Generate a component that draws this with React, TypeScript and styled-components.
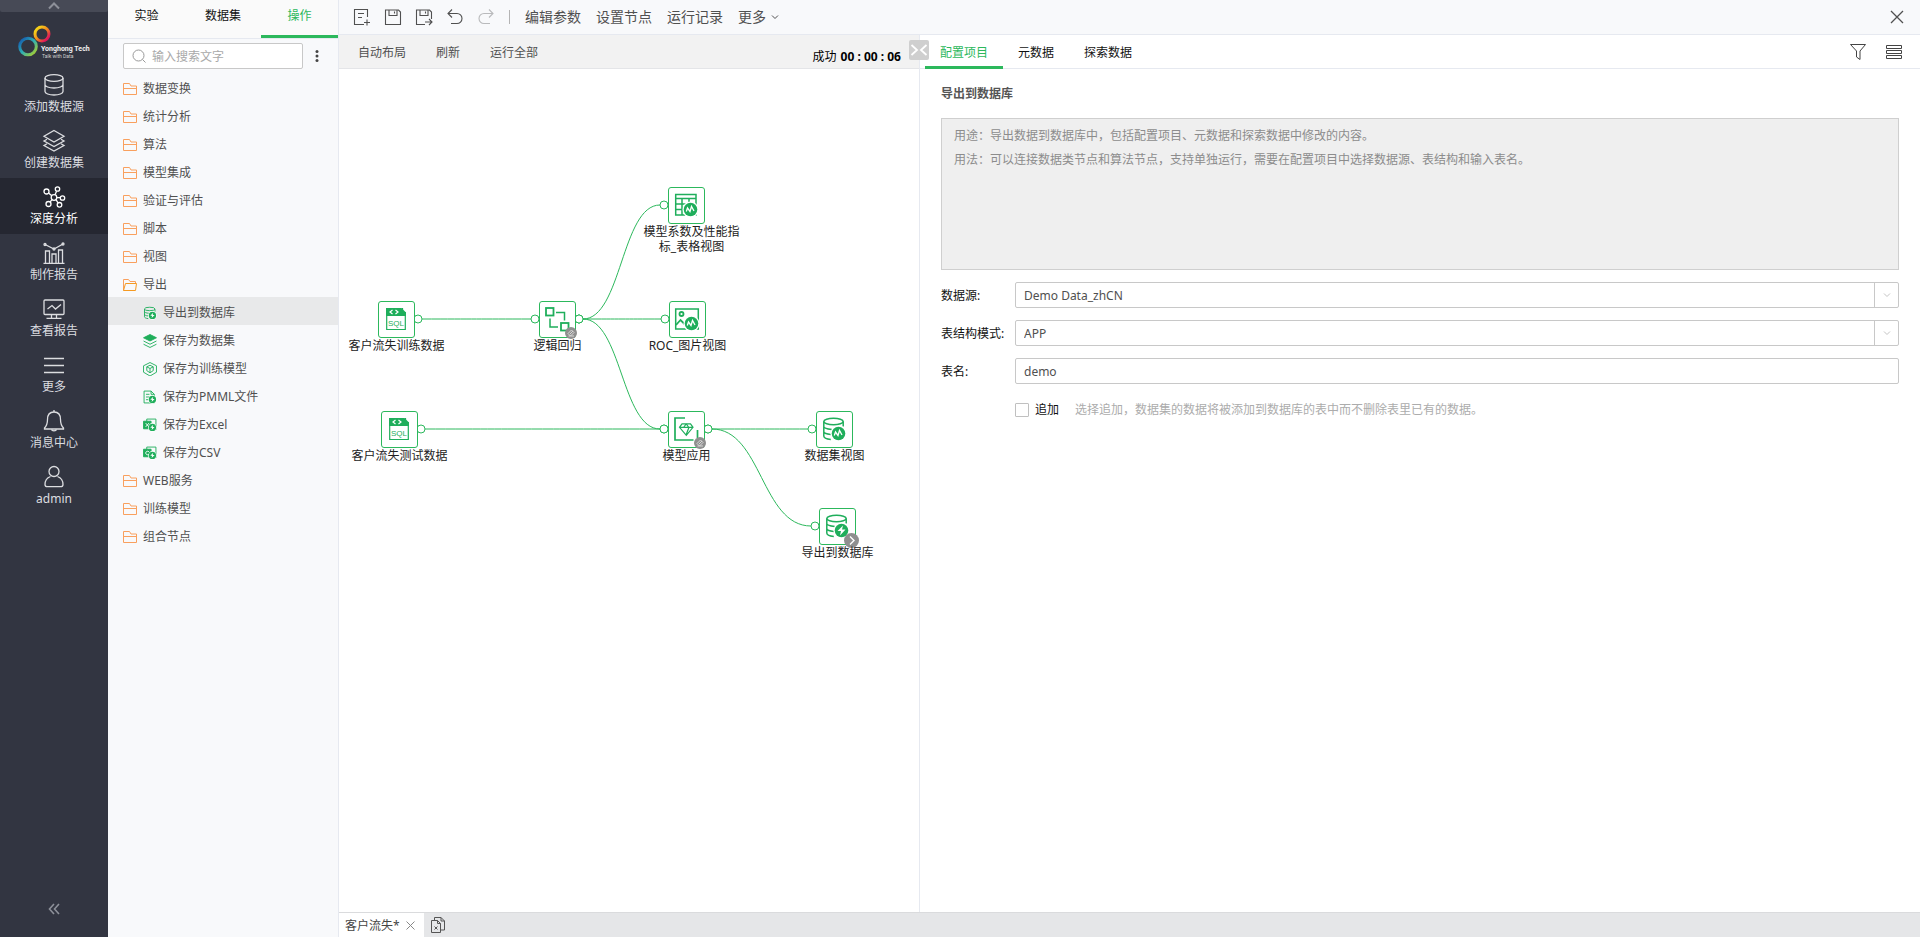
import React, { useState } from "react";
import styled, { createGlobalStyle } from "styled-components";

const green = "#2cb85c";
const iconGreen = "#1fae5b";
const line = "#e6e9f0";
const ink = "#505050";

const GlobalStyle = createGlobalStyle`
  *, *::before, *::after { box-sizing: border-box; }
  body {
    margin: 0;
    font-family: "Noto Sans", "Noto Sans CJK SC", sans-serif;
    font-size: 12px;
    line-height: 16px;
    color: #333;
    background: #fff;
  }
  button, input, select { font: inherit; color: inherit; }
  button { padding: 0; border: 0; background: none; cursor: pointer; }
  ul { margin: 0; padding: 0; list-style: none; }
  svg { display: block; flex: none; }
`;

/* ---------- shell ---------- */

const Shell = styled.div`
  display: grid;
  grid-template-columns: 108px 231px minmax(0, 1fr);
  min-height: 100vh;
`;

const Nav = styled.nav`
  display: flex;
  flex-direction: column;
  background: #323541;
  color: #dcdde0;
`;

const NavFold = styled.button`
  display: flex;
  justify-content: center;
  align-items: center;
  height: 12px;
  background: #474a56;
  border-radius: 0 0 2px 2px;
`;

const Logo = styled.div`
  height: 54px;
`;

const NavItem = styled.button<{ $active?: boolean }>`
  display: flex;
  flex-direction: column;
  align-items: center;
  gap: 2px;
  width: 100%;
  height: 56px;
  padding-top: 7px;
  background: ${(p) => (p.$active ? "#252731" : "transparent")};
  color: ${(p) => (p.$active ? "#fff" : "inherit")};
`;

const NavCollapse = styled.button`
  display: flex;
  justify-content: center;
  margin-top: auto;
  padding-bottom: 20px;
  color: #8d9099;
`;

/* ---------- side panel ---------- */

const Side = styled.aside`
  display: flex;
  flex-direction: column;
  background: #f8f9fb;
  border-right: 1px solid ${line};
`;

const SideTabs = styled.div`
  display: grid;
  grid-template-columns: 77px 76px 77px;
  height: 39px;
  background: #fafafa;
  border-bottom: 1px solid ${line};
`;

const SideTab = styled.button<{ $active?: boolean }>`
  padding-bottom: 4px;
  border-bottom: 3px solid ${(p) => (p.$active ? green : "transparent")};
  color: ${(p) => (p.$active ? green : "#111")};
`;

const SearchRow = styled.div`
  display: flex;
  align-items: center;
  gap: 12px;
  padding: 4px 0 4px 15px;
`;

const SearchBox = styled.label`
  display: flex;
  align-items: center;
  gap: 6px;
  width: 180px;
  height: 26px;
  padding: 0 8px;
  background: #fff;
  border: 1px solid #c8c8c8;
  border-radius: 2px;
  color: #999;

  input {
    flex: 1;
    min-width: 0;
    padding: 2px 0 0;
    border: 0;
    outline: 0;
    background: none;
  }
  input::placeholder { color: #a9a9a9; opacity: 1; }
`;

const TreeRow = styled.button<{ $child?: boolean; $active?: boolean }>`
  display: flex;
  align-items: center;
  gap: 6px;
  width: 100%;
  height: 28px;
  padding-top: 3px;
  padding-left: ${(p) => (p.$child ? 35 : 15)}px;
  background: ${(p) => (p.$active ? "#e8e9ea" : "transparent")};
  color: ${ink};
  text-align: left;
`;

/* ---------- main area ---------- */

const Main = styled.main`
  display: grid;
  grid-template-rows: 35px minmax(0, 1fr) 25px;
  min-width: 0;
`;

const TopBar = styled.header`
  display: flex;
  align-items: center;
  padding: 0 16px 0 14px;
  background: #f8f9fb;
  border-bottom: 1px solid ${line};
  color: ${ink};
`;

const IconGroup = styled.div`
  display: flex;
  gap: 13px;
`;

const IconButton = styled.button<{ $muted?: boolean }>`
  color: ${(p) => (p.$muted ? "#b9babc" : ink)};
`;

const Separator = styled.span`
  width: 1px;
  height: 14px;
  margin: 0 15px 0 14px;
  background: #b4b4b4;
`;

const MenuGroup = styled.div`
  display: flex;
  gap: 15px;
  font-size: 14px;
`;

const MenuButton = styled.button`
  display: flex;
  align-items: center;
  gap: 5px;
`;

const CloseButton = styled.button`
  margin-left: auto;
`;

const Workspace = styled.div`
  display: grid;
  grid-template-columns: 581fr 1000fr;
`;

const FlowPane = styled.section`
  position: relative;
  display: flex;
  flex-direction: column;
  border-right: 1px solid ${line};
`;

const FlowBar = styled.div`
  display: flex;
  align-items: center;
  gap: 30px;
  height: 34px;
  padding: 2px 18px 0 19px;
  background: #f2f2f2;
  border-bottom: 1px solid #e4e5e8;
  color: ${ink};
`;

const Status = styled.span`
  margin-left: auto;
  padding-top: 8px;
  color: #000;

  b { margin-left: 4px; }
`;

const SplitHandle = styled.button`
  position: absolute;
  top: 5px;
  right: -10px;
  display: grid;
  place-items: center;
  width: 20px;
  height: 20px;
  background: #cfcfcf;
  border-radius: 2px;
  color: #fff;
`;

const Canvas = styled.div`
  position: relative;
  flex: 1;
  min-height: 480px;
  overflow: hidden;
`;

const Edges = styled.svg`
  position: absolute;
  inset: 0;
  width: 100%;
  height: 100%;
`;

const Node = styled.div<{ $x: number; $y: number }>`
  position: absolute;
  left: ${(p) => p.$x - 30}px;
  top: ${(p) => p.$y}px;
  display: flex;
  flex-direction: column;
  align-items: center;
  width: 97px;
`;

const NodeBox = styled.div`
  position: relative;
  width: 37px;
  height: 37px;
  background: #fff;
  border: 1px solid ${green};
  border-radius: 3px;

  > svg { margin: -1px; }
`;

/* A wrapped label is hung from a wider block, which carries it to the right of the box. */
const NodeLabel = styled.span<{ $wrapped?: boolean }>`
  position: relative;
  width: ${(p) => (p.$wrapped ? "107px" : "auto")};
  padding-left: ${(p) => (p.$wrapped ? 10 : 0)}px;
  line-height: 15px;
  text-align: center;
  word-break: break-all;
  color: #222;
`;

const Badge = styled.span<{ $size: number }>`
  position: absolute;
  right: ${(p) => 4 - Math.ceil(p.$size / 2)}px;
  bottom: ${(p) => 4 - Math.ceil(p.$size / 2)}px;
  display: grid;
  place-items: center;
  width: ${(p) => p.$size}px;
  height: ${(p) => p.$size}px;
  border-radius: 50%;
  background: #8f8f8f;
  color: #fff;
`;

/* ---------- config pane ---------- */

const ConfigPane = styled.section`
  min-width: 0;
`;

const ConfigTabs = styled.div`
  display: flex;
  height: 34px;
  padding: 0 18px 0 5px;
  border-bottom: 1px solid ${line};
`;

const ConfigTab = styled.button<{ $active?: boolean }>`
  height: 34px;
  padding: 0 15px;
  border-top: 4px solid transparent;
  border-bottom: 3px solid ${(p) => (p.$active ? green : "transparent")};
  color: ${(p) => (p.$active ? green : "#111")};
`;

const ConfigActions = styled.div`
  display: flex;
  align-items: center;
  gap: 20px;
  margin-left: auto;
  color: #444;
`;

const ConfigBody = styled.div`
  display: flex;
  flex-direction: column;
  padding: 17px 21px 16px 21px;
`;

const Title = styled.h2`
  margin: 0 0 16px;
  font-size: 12px;
  line-height: 16px;
  font-weight: 600;
  color: #555;
`;

const Help = styled.div`
  height: 152px;
  margin-bottom: 12px;
  padding: 5px 12px;
  background: #efefef;
  border: 1px solid #cfcfcf;
  color: #8c8c8c;

  p { margin: 0; line-height: 24px; }
`;

const Field = styled.div`
  display: grid;
  grid-template-columns: 74px minmax(0, 1fr);
  align-items: center;
  height: 26px;
  margin-bottom: 12px;

  > label { padding-top: 1px; color: #111; }
`;

const TextInput = styled.input`
  width: 100%;
  height: 26px;
  padding: 1px 8px 0;
  border: 1px solid #c8c8c8;
  border-radius: 2px;
  color: ${ink};
  outline: 0;
`;

const SelectBox = styled.div`
  display: grid;
  grid-template-columns: minmax(0, 1fr) 24px;
  height: 26px;
  border: 1px solid #c8c8c8;
  border-radius: 2px;
  color: #c4c4c4;

  select {
    grid-area: 1 / 1 / 2 / 3;
    appearance: none;
    width: 100%;
    padding: 2px 32px 0 8px;
    border: 0;
    outline: 0;
    background: none;
    color: ${ink};
  }
  > span {
    grid-area: 1 / 2;
    display: grid;
    place-items: center;
    border-left: 1px solid #c8c8c8;
    pointer-events: none;
  }
`;

const CheckRow = styled.div`
  display: flex;
  align-items: center;
  height: 26px;
  padding-top: 1px;
  padding-left: 74px;

  input {
    appearance: none;
    width: 14px;
    height: 14px;
    margin: 0 6px 0 0;
    border: 1px solid #c0c0c0;
    border-radius: 1px;
    background: #fff;
  }
  input:checked { background: ${green}; }
  label { color: #111; }
  span { margin-left: 16px; color: #acacac; }
`;

/* ---------- sheet tabs ---------- */

const SheetBar = styled.footer`
  display: flex;
  align-items: stretch;
  background: #e5e6e8;
  border-top: 1px solid #dadbdd;
`;

const SheetTab = styled.div`
  display: flex;
  align-items: center;
  gap: 6px;
  width: 85px;
  padding-top: 1px;
  padding-left: 6px;
  background: #fff;
  color: #444;
`;

const SheetAdd = styled.button`
  padding: 0 7px;
  color: #555;
`;

/* ---------- icons ---------- */

type Kids = { children: React.ReactNode };

const Icon = ({ w, h = w, sw = 1, children }: Kids & { w: number; h?: number; sw?: number }) => (
  <svg width={w} height={h} viewBox={`0 0 ${w} ${h}`} fill="none" stroke="currentColor" strokeWidth={sw} aria-hidden="true">
    {children}
  </svg>
);

const NavIcon = ({ children }: Kids) => (
  <Icon w={24} sw={1.3}>{children}</Icon>
);

const ToolIcon = ({ d }: { d: string }) => (
  <Icon w={18} h={20} sw={1.1}><path d={d} /></Icon>
);

const navIcons: Record<string, React.ReactNode> = {
  source: (
    <>
      <ellipse cx="12" cy="5" rx="9" ry="3.4" />
      <path d="M3 5v13.5c0 2 4 3.5 9 3.5s9-1.5 9-3.5V5M3 11.5c0 2 4 3.5 9 3.5s9-1.5 9-3.5" />
    </>
  ),
  dataset: (
    <>
      <path d="M12 1.5l10 5.8-10 5.7L2 7.3z" />
      <path d="M5 10.3l-3 1.7 10 5.5L22 12l-3-1.7" />
      <path d="M5 14.8l-3 1.7L12 22l10-5.5-3-1.7" />
    </>
  ),
  analysis: (
    <>
      <circle cx="12" cy="12.5" r="2.8" />
      <circle cx="4.5" cy="6.5" r="2.5" />
      <circle cx="15.5" cy="4" r="2.2" />
      <circle cx="20.5" cy="13" r="2.2" />
      <circle cx="6.5" cy="19" r="2.5" />
      <circle cx="17.5" cy="19.8" r="2.3" />
      <path d="M9.8 10.8L6.6 8M13 9.8l1.6-3.6M14.8 12.6h3.5M10 14.6l-1.9 2.4M14 14.6l2 3.2" />
    </>
  ),
  make: (
    <>
      <path d="M1.5 22.3h21M3.5 22V10h4v12M10 22v-9h4v9M16.5 22V9h4v13" />
      <path d="M3 3.5l9 4.5 9-5" />
      <circle cx="3" cy="3.5" r="1" /><circle cx="12" cy="8" r="1" /><circle cx="21" cy="3" r="1" />
    </>
  ),
  view: (
    <>
      <rect x="2" y="3" width="20" height="14.5" rx="1" />
      <path d="M5.5 12l4.5-3.5 3.5 3.5 5.5-4.5M9.5 17.5V21M14.5 17.5V21M4.5 21.3h15" />
    </>
  ),
  more: <path d="M2 5.5h20M2 12.5h20M2 19.5h20" />,
  bell: (
    <>
      <path d="M12 3c4.5 0 6.5 3.2 6.5 7.5 0 5 1.5 7 3 8.5v1h-19v-1c1.5-1.5 3-3.5 3-8.5C5.5 6.2 7.5 3 12 3z" />
      <path d="M12 3V1M9.5 20.5c.5 1.7 4.5 1.7 5 0" />
    </>
  ),
  user: (
    <>
      <circle cx="12" cy="6.5" r="5" />
      <path d="M8.5 11.5C4.5 13 3 16 3 19.5c0 1.5 1 2.2 2.5 2.2h13c1.5 0 2.5-.7 2.5-2.2 0-3.5-1.5-6.5-5.5-8" />
    </>
  ),
};

const BrandMark = () => (
  <svg width="108" height="54" viewBox="0 12 108 54" fill="none">
    <defs>
      <linearGradient id="warm" x1="0" y1="0" x2="1" y2="1">
        <stop offset="0.15" stopColor="#f5d019" />
        <stop offset="0.5" stopColor="#f08a1e" />
        <stop offset="0.85" stopColor="#e0185a" />
      </linearGradient>
      <linearGradient id="cool" x1="0" y1="0" x2="1" y2="1">
        <stop offset="0.1" stopColor="#1763b0" />
        <stop offset="0.5" stopColor="#2fb0b4" />
        <stop offset="0.9" stopColor="#9ccb3b" />
      </linearGradient>
    </defs>
    <circle cx="42" cy="34" r="7" stroke="url(#warm)" strokeWidth="3" />
    <circle cx="28" cy="46.5" r="8.3" stroke="url(#cool)" strokeWidth="3" />
    <text x="41" y="51" fill="#f0f0f0" fontFamily="Roboto, sans-serif" fontSize="7" fontWeight="700">Yonghong Tech</text>
    <text x="42" y="58" fill="#d0d0d0" fontFamily="Roboto, sans-serif" fontSize="5">Talk with Data</text>
  </svg>
);

const Folder = () => (
  <svg width="14" height="14" viewBox="0 0 14 14" fill="none" stroke="#f9a05e">
    <path d="M.5 12.5v-11h6l1.500 2.500h5.500v8.500zM.5 6.500h13" />
  </svg>
);

const FolderOpen = () => (
  <svg width="14" height="14" viewBox="0 0 14 14" fill="none" stroke="#f59a22">
    <path d="M.5 12.5v-11h5l1.500 2h5.500v2" stroke="#f9a05e" />
    <path d="M2.5 5.500h11l-1 7h-12z" />
  </svg>
);

const Chevron = () => (
  <Icon w={8} h={6}><path d="M1 1.5l3 3 3-3" /></Icon>
);

/* Node glyphs are drawn on the 37px node box. */

const Disc = ({ bolt }: { bolt?: boolean }) => (
  <>
    <circle cx="22.5" cy="22.5" r="8" fill="#fff" stroke="none" />
    <circle cx="22.5" cy="22.5" r="6.8" fill={iconGreen} stroke="none" />
    {bolt ? (
      <path d="M24 17.5l-5.5 5.5h3.500l-1 4.500 5.500-6h-3.500z" fill="#fff" stroke="none" />
    ) : (
      <path d="M18.3 24.500l1.200-3.500 2.500 3.500 1.500-5 2.500 4.500" stroke="#fff" strokeWidth="1.3" />
    )}
  </>
);

const Cylinder = () => (
  <>
    <ellipse cx="17.5" cy="10.5" rx="9.7" ry="3.2" />
    <path d="M7.8 10.5v14.500c0 1.500 2.500 3 7 3.500M27.2 10.500v5M7.800 15.500c0 1.500 3 2.500 8 3M7.800 20.500c0 1.500 2.500 2.500 7 3" />
  </>
);

const glyphs: Record<string, React.ReactNode> = {
  sql: (
    <>
      <path d="M8 15V7h15.5L28 11.5V15z" fill={iconGreen} stroke="none" />
      <path d="M24.5 7v4.500H28M8.700 15v13.500h18.600V15" strokeWidth="1.2" />
      <path d="M14.5 9l-2.500 2 2.500 2M17.500 9l2.500 2-2.500 2" stroke="#fff" strokeWidth="1.2" />
      <text x="18" y="24.5" textAnchor="middle" fill={iconGreen} stroke="none" fontSize="8" fontFamily="Liberation Sans, sans-serif">SQL</text>
    </>
  ),
  logic: (
    <>
      <rect x="7" y="7" width="7.5" height="7.5" strokeWidth="1.8" />
      <rect x="22" y="22" width="7.5" height="7.5" strokeWidth="1.8" />
      <path d="M17 11.500h8.500v8M11 17.500v8.500h8" />
    </>
  ),
  table: (
    <>
      <path d="M7.7 7.500h20.300v20.500H7.700zM7.700 11.500H28M7.700 17H28M7.700 22.500H20M14 11.500V28M21 11.500V17" />
      <Disc />
    </>
  ),
  image: (
    <>
      <path d="M6.7 8h22.600v20H6.700z" />
      <circle cx="12.5" cy="13" r="2" strokeWidth="1.8" />
      <path d="M7 24l4.500-5 4 4" strokeWidth="1.8" />
      <Disc />
    </>
  ),
  apply: (
    <>
      <path d="M17 7H7v22h18.500M29.500 19v8" strokeWidth="1.7" />
      <path d="M14 12.800h8.500l2.500 3.500-6.700 8-6.800-8zM11.800 16.300h13M15.500 16.500l2.700-3.500 2.700 3.500-2.700 7" strokeWidth="1.2" />
    </>
  ),
  dbView: (<><Cylinder /><Disc /></>),
  dbExport: (<><Cylinder /><Disc bolt /></>),
  stack: (
    <>
      <path d="M18 6l12 6-12 6-12-6z" fill={iconGreen} />
      <path d="M6 18l12 6 12-6M6 24l12 6 12-6" />
    </>
  ),
  cube: (
    <>
      <path d="M18 6l12 6v12l-12 7-12-7V12z" />
      <path d="M12 14l6-3 6 3v7l-6 4-6-4zM12 14l6 3 6-3M18 17v8" />
    </>
  ),
  pmml: (
    <>
      <path d="M7 7h13l6 6v16H7zM20 7v6h6M10.500 13H17M10.500 18h8M10.500 23h5" />
      <Disc bolt />
    </>
  ),
  excel: (
    <>
      <path d="M12 12V7h17v20" />
      <path d="M6 11h14v14H6z" fill={iconGreen} />
      <path d="M10 14.500l6 7M16 14.500l-6 7" stroke="#fff" />
      <Disc bolt />
    </>
  ),
  csv: (
    <>
      <path d="M12 12V7h17v20" />
      <path d="M6 11h14v14H6z" fill={iconGreen} />
      <path d="M16 15.500c-3-2-6 0-6 2.500s3 4.500 6 2.500" stroke="#fff" />
      <Disc bolt />
    </>
  ),
};

const NodeGlyph = ({ name }: { name: string }) => (
  <svg width="37" height="37" viewBox="0 0 37 37" fill="none" stroke={iconGreen} strokeWidth="1.5">
    {glyphs[name]}
  </svg>
);

const TreeGlyph = ({ name }: { name: string }) => (
  <svg width="14" height="14" viewBox="5 5 26 26" fill="none" stroke={iconGreen} strokeWidth="1.7">
    {glyphs[name]}
  </svg>
);

/* ---------- data ---------- */

const navItems = [
  ["source", "添加数据源"],
  ["dataset", "创建数据集"],
  ["analysis", "深度分析"],
  ["make", "制作报告"],
  ["view", "查看报告"],
  ["more", "更多"],
  ["bell", "消息中心"],
  ["user", "admin"],
];

const foldersBefore = ["数据变换", "统计分析", "算法", "模型集成", "验证与评估", "脚本", "视图"];
const foldersAfter = ["WEB服务", "训练模型", "组合节点"];
const exportItems = [
  ["dbExport", "导出到数据库"],
  ["stack", "保存为数据集"],
  ["cube", "保存为训练模型"],
  ["pmml", "保存为PMML文件"],
  ["excel", "保存为Excel"],
  ["csv", "保存为CSV"],
];

type FlowNode = { x: number; y: number; glyph: string; label: string; badge?: "edit" | "next" };

const nodes: FlowNode[] = [
  { x: 329, y: 118, glyph: "table", label: "模型系数及性能指标_表格视图" },
  { x: 39, y: 232, glyph: "sql", label: "客户流失训练数据" },
  { x: 200, y: 232, glyph: "logic", label: "逻辑回归", badge: "edit" },
  { x: 330, y: 232, glyph: "image", label: "ROC_图片视图" },
  { x: 42, y: 342, glyph: "sql", label: "客户流失测试数据" },
  { x: 329, y: 342, glyph: "apply", label: "模型应用", badge: "edit" },
  { x: 477, y: 342, glyph: "dbView", label: "数据集视图" },
  { x: 480, y: 439, glyph: "dbExport", label: "导出到数据库", badge: "next" },
];

/* Port centres: [x1, y1, x2, y2] for every connection. */
const edges = [
  [79, 250, 196, 250],
  [240, 250, 325, 136],
  [240, 250, 326, 250],
  [240, 250, 325, 360],
  [82, 360, 325, 360],
  [369, 360, 473, 360],
  [369, 360, 476, 457],
];

const edgePath = ([x1, y1, x2, y2]: number[]) => {
  const mid = (x1 + x2) / 2;
  return `M${x1 + 4} ${y1}C${mid} ${y1} ${mid} ${y2} ${x2 - 4} ${y2}`;
};

export default function App() {
  const [append, setAppend] = useState(false);
  const [tableName, setTableName] = useState("demo");

  return (
    <>
      <GlobalStyle />
      <Shell>
        <Nav>
          <NavFold aria-label="收起顶部">
            <Icon w={14} h={8} sw={2}><path d="M2 6.500l5-5 5 5" stroke="#8d9099" /></Icon>
          </NavFold>
          <Logo><BrandMark /></Logo>
          {navItems.map(([icon, label]) => (
            <NavItem key={icon} $active={icon === "analysis"}>
              <NavIcon>{navIcons[icon]}</NavIcon>
              {label}
            </NavItem>
          ))}
          <NavCollapse aria-label="收起导航">
            <Icon w={12} h={16} sw={1.6}><path d="M6 3L1.500 8 6 13M11 3L6.500 8l4.500 5" /></Icon>
          </NavCollapse>
        </Nav>

        <Side>
          <SideTabs>
            <SideTab>实验</SideTab>
            <SideTab>数据集</SideTab>
            <SideTab $active>操作</SideTab>
          </SideTabs>
          <SearchRow>
            <SearchBox>
              <Icon w={14}><circle cx="6.5" cy="6.5" r="5.5" /><path d="M10.500 10.500l3 3" /></Icon>
              <input type="text" placeholder="输入搜索文字" aria-label="输入搜索文字" />
            </SearchBox>
            <IconButton aria-label="更多操作">
              <svg width="4" height="14" viewBox="0 0 4 14" fill="#444">
                <circle cx="2" cy="2.5" r="1.5" /><circle cx="2" cy="7" r="1.5" /><circle cx="2" cy="11.5" r="1.5" />
              </svg>
            </IconButton>
          </SearchRow>
          <ul>
            {foldersBefore.map((f) => (
              <li key={f}><TreeRow><Folder />{f}</TreeRow></li>
            ))}
            <li>
              <TreeRow><FolderOpen />导出</TreeRow>
              <ul>
                {exportItems.map(([glyph, label], i) => (
                  <li key={glyph}>
                    <TreeRow $child $active={i === 0}><TreeGlyph name={glyph} />{label}</TreeRow>
                  </li>
                ))}
              </ul>
            </li>
            {foldersAfter.map((f) => (
              <li key={f}><TreeRow><Folder />{f}</TreeRow></li>
            ))}
          </ul>
        </Side>

        <Main>
          <TopBar>
            <IconGroup>
              <IconButton aria-label="新建">
                <ToolIcon d="M14.500 10V2.500h-13v15H11M5 6.500h6M5 10.500h4M14 12.500v6M11 15.500h6" />
              </IconButton>
              <IconButton aria-label="保存">
                <ToolIcon d="M1.500 3h13l2 2v12.500h-15zM5 3v5.500h8V3M10.500 4.500v2" />
              </IconButton>
              <IconButton aria-label="另存为">
                <ToolIcon d="M10 17.500H1.500V3h13l2 2V12M5 3v5.500h8V3M10.500 4.500v2M10 15h7M14 12l3 3-3 3" />
              </IconButton>
              <IconButton aria-label="撤销">
                <ToolIcon d="M6 2.500L2 6.500l4 4M2 6.500h9a5 5 0 010 10H5" />
              </IconButton>
              <IconButton aria-label="重做" $muted>
                <ToolIcon d="M12 2.500l4 4-4 4M16 6.500H7a5 5 0 000 10h6" />
              </IconButton>
            </IconGroup>
            <Separator />
            <MenuGroup>
              <MenuButton>编辑参数</MenuButton>
              <MenuButton>设置节点</MenuButton>
              <MenuButton>运行记录</MenuButton>
              <MenuButton>更多<Chevron /></MenuButton>
            </MenuGroup>
            <CloseButton aria-label="关闭">
              <Icon w={14} sw={1.3}><path d="M1 1l12 12M13 1L1 13" /></Icon>
            </CloseButton>
          </TopBar>

          <Workspace>
            <FlowPane>
              <FlowBar>
                <button>自动布局</button>
                <button>刷新</button>
                <button>运行全部</button>
                <Status>成功<b>00 : 00 : 06</b></Status>
              </FlowBar>
              <SplitHandle aria-label="调整面板">
                <Icon w={18} h={14} sw={1.8}><path d="M1.500 2L7 7l-5.500 5M16.500 2L11 7l5.500 5" /></Icon>
              </SplitHandle>
              <Canvas>
                <Edges fill="none" stroke={green}>
                  {edges.map((e) => <path key={e.join()} d={edgePath(e)} />)}
                  {edges.map(([x1, y1, x2, y2]) => (
                    <g key={`${x1}-${y1}-${x2}-${y2}`} fill="#fff">
                      <circle cx={x1} cy={y1} r="4" />
                      <circle cx={x2} cy={y2} r="4" />
                    </g>
                  ))}
                </Edges>
                {nodes.map((n) => (
                  <Node key={n.label} $x={n.x} $y={n.y}>
                    <NodeBox>
                      <NodeGlyph name={n.glyph} />
                      {n.badge === "edit" && (
                        <Badge $size={12}>
                          <Icon w={10}><path d="M2 5.500L5.500 2 8 4.500 4.500 8zM4 6l3-3M2.500 8h5.500" stroke="#d8d8d8" /></Icon>
                        </Badge>
                      )}
                      {n.badge === "next" && (
                        <Badge $size={15}>
                          <Icon w={9} h={11} sw={1.4}><path d="M3 1.500l4 4-4 4" /></Icon>
                        </Badge>
                      )}
                    </NodeBox>
                    <NodeLabel $wrapped={n.label.length > 8}>{n.label}</NodeLabel>
                  </Node>
                ))}
              </Canvas>
            </FlowPane>

            <ConfigPane>
              <ConfigTabs>
                <ConfigTab $active>配置项目</ConfigTab>
                <ConfigTab>元数据</ConfigTab>
                <ConfigTab>探索数据</ConfigTab>
                <ConfigActions>
                  <button aria-label="筛选">
                    <Icon w={16}><path d="M.5 .5h15L10 7v8.500L6.500 13V7z" /></Icon>
                  </button>
                  <button aria-label="列表">
                    <Icon w={16}><path d="M.5 1.500h15v3H.5zM.5 6.500h15v3H.5zM.5 11.500h15v3H.5z" /></Icon>
                  </button>
                </ConfigActions>
              </ConfigTabs>
              <ConfigBody>
                <Title>导出到数据库</Title>
                <Help>
                  <p>用途：导出数据到数据库中，包括配置项目、元数据和探索数据中修改的内容。</p>
                  <p>用法：可以连接数据类节点和算法节点，支持单独运行，需要在配置项目中选择数据源、表结构和输入表名。</p>
                </Help>
                <Field>
                  <label htmlFor="source">数据源:</label>
                  <SelectBox>
                    <select id="source"><option>Demo Data_zhCN</option></select>
                    <span><Chevron /></span>
                  </SelectBox>
                </Field>
                <Field>
                  <label htmlFor="schema">表结构模式:</label>
                  <SelectBox>
                    <select id="schema"><option>APP</option></select>
                    <span><Chevron /></span>
                  </SelectBox>
                </Field>
                <Field>
                  <label htmlFor="table">表名:</label>
                  <TextInput id="table" value={tableName} onChange={(e) => setTableName(e.target.value)} />
                </Field>
                <CheckRow>
                  <input id="append" type="checkbox" checked={append} onChange={(e) => setAppend(e.target.checked)} />
                  <label htmlFor="append">追加</label>
                  <span>选择追加，数据集的数据将被添加到数据库的表中而不删除表里已有的数据。</span>
                </CheckRow>
              </ConfigBody>
            </ConfigPane>
          </Workspace>

          <SheetBar>
            <SheetTab>
              客户流失*
              <button aria-label="关闭标签">
                <Icon w={9}><path d="M.5 .5l8 8M8.500 .5l-8 8" stroke="#888" /></Icon>
              </button>
            </SheetTab>
            <SheetAdd aria-label="新建标签">
              <Icon w={14} h={16}><path d="M.5 3.500h6l3 3v9h-9zM6.500 3.500v3h3M3.500 3V.5H10l3.500 3.500v9H10M10 .5V4h3.500M3.500 9.500l3 3M6.500 9.500l-3 3" /></Icon>
            </SheetAdd>
          </SheetBar>
        </Main>
      </Shell>
    </>
  );
}
